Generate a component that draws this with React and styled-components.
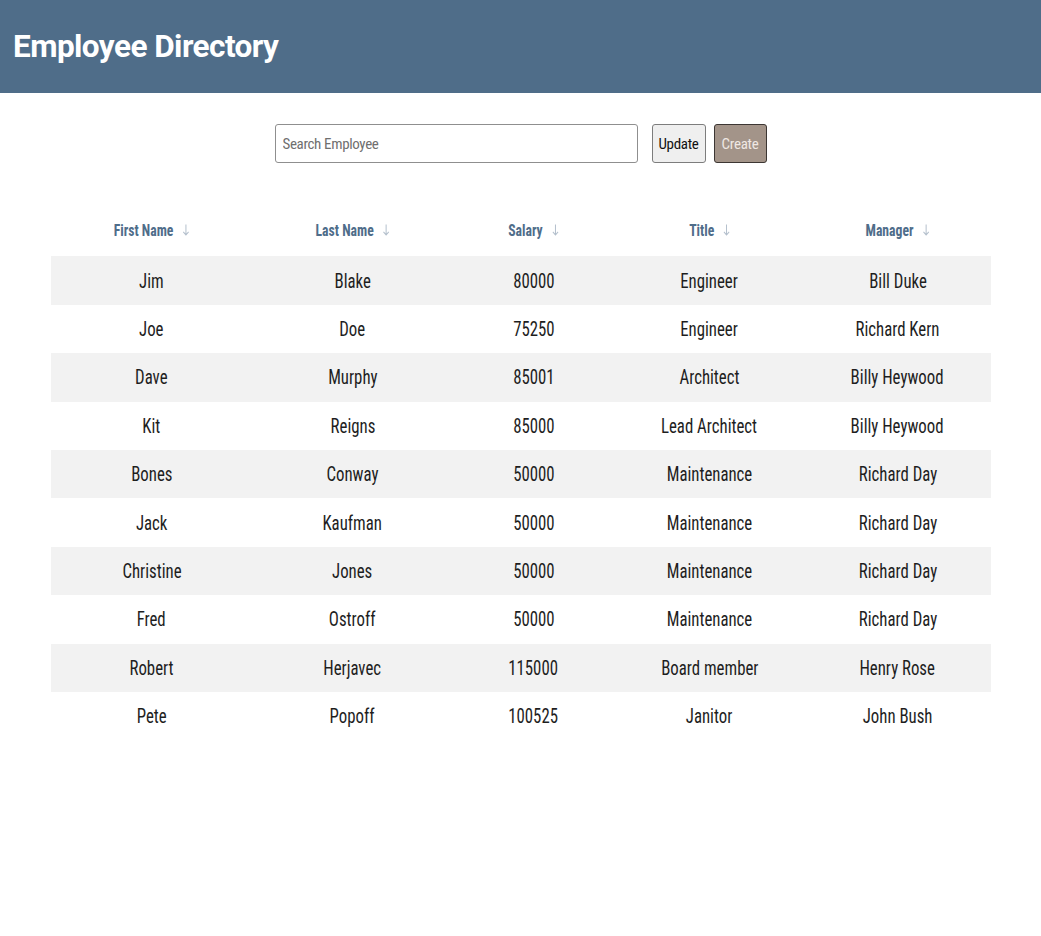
import React from 'react';
import styled, { createGlobalStyle } from 'styled-components';

const GlobalStyle = createGlobalStyle`
  html, body { margin: 0; padding: 0; background: #ffffff; }
  body { font-family: Roboto, "Liberation Sans", Arial, sans-serif; color: #1b1b1b; }
`;

const employees = [
  ['Jim', 'Blake', '80000', 'Engineer', 'Bill Duke'],
  ['Joe', 'Doe', '75250', 'Engineer', 'Richard Kern'],
  ['Dave', 'Murphy', '85001', 'Architect', 'Billy Heywood'],
  ['Kit', 'Reigns', '85000', 'Lead Architect', 'Billy Heywood'],
  ['Bones', 'Conway', '50000', 'Maintenance', 'Richard Day'],
  ['Jack', 'Kaufman', '50000', 'Maintenance', 'Richard Day'],
  ['Christine', 'Jones', '50000', 'Maintenance', 'Richard Day'],
  ['Fred', 'Ostroff', '50000', 'Maintenance', 'Richard Day'],
  ['Robert', 'Herjavec', '115000', 'Board member', 'Henry Rose'],
  ['Pete', 'Popoff', '100525', 'Janitor', 'John Bush'],
];

const columns = [
  { label: 'First Name', width: 202 },
  { label: 'Last Name', width: 200 },
  { label: 'Salary', width: 162 },
  { label: 'Title', width: 190 },
  { label: 'Manager', width: 186 },
];

const Page = styled.div`
  min-height: 936px;
  background: #ffffff;
`;

const Header = styled.header`
  height: 93px;
  background: #4f6d89;
  display: flex;
  align-items: center;
  padding-left: 13px;
  box-sizing: border-box;
`;

const Title = styled.h1`
  margin: 0;
  font-family: Roboto, sans-serif;
  font-weight: 700;
  font-size: 31.5px;
  letter-spacing: -0.55px;
  color: #ffffff;
  line-height: 1;
`;

const Toolbar = styled.div`
  display: flex;
  justify-content: center;
  align-items: stretch;
  margin-top: 31px;
  height: 39px;
`;

const SearchInput = styled.input`
  width: 363px;
  height: 39px;
  box-sizing: border-box;
  border: 1px solid #8f8f8f;
  border-radius: 3px;
  padding: 0 7px;
  font-family: Roboto, sans-serif;
  font-stretch: condensed;
  font-size: 15px;
  letter-spacing: -0.35px;
  color: #222;
  outline: none;
  &::placeholder { color: #6f6f6f; }
`;

const Button = styled.button`
  height: 39px;
  width: ${p => p.$w}px;
  margin-left: ${p => p.$gap}px;
  box-sizing: border-box;
  padding: 0;
  border-radius: 3px;
  font-family: Roboto, sans-serif;
  font-stretch: condensed;
  font-size: 15px;
  letter-spacing: -0.3px;
  cursor: pointer;
  background: ${p => (p.$primary ? '#a39489' : '#efefef')};
  color: ${p => (p.$primary ? '#efe8e3' : '#111')};
  border: 1px solid ${p => (p.$primary ? '#3c3633' : '#7d7d7d')};
`;

const Table = styled.table`
  margin: 43px auto 0;
  width: 940px;
  border-collapse: collapse;
  table-layout: fixed;
`;

const HeadCell = styled.th`
  height: 48.4px;
  padding: 0 0 2px;
  text-align: center;
  vertical-align: middle;
  font-family: Roboto, sans-serif;
  font-stretch: condensed;
  font-weight: 700;
  font-size: 16.5px;
  color: #4f6d8a;
`;

const BodyRow = styled.tr`
  height: 48.4px;
  background: ${p => (p.$alt ? '#f2f2f2' : '#ffffff')};
`;

const Cell = styled.td`
  padding: 0;
  text-align: center;
  vertical-align: middle;
  font-family: Roboto, sans-serif;
  font-stretch: condensed;
  font-weight: 400;
  font-size: 21px;
  color: #1e1e1e;
  white-space: nowrap;
`;

const Squeeze = styled.span`
  display: inline-flex;
  align-items: center;
  transform: scaleX(${p => p.$x});
  transform-origin: center;
`;

const SortArrow = styled.svg`
  width: 8px;
  height: 12px;
  margin-left: 11px;
  flex: none;
`;

function Arrow() {
  return (
    <SortArrow viewBox="0 0 8 12" aria-hidden="true">
      <path d="M4 0.5 V11 M0.8 7.8 L4 11 L7.2 7.8" fill="none" stroke="#b3bfcc" strokeWidth="1.2" />
    </SortArrow>
  );
}

export default function App() {
  return (
    <Page>
      <GlobalStyle />
      <Header>
        <Title>Employee Directory</Title>
      </Header>
      <Toolbar>
        <SearchInput placeholder="Search Employee" />
        <Button $w={54} $gap={14}>Update</Button>
        <Button $w={53} $gap={8} $primary>Create</Button>
      </Toolbar>
      <Table>
        <colgroup>
          {columns.map(c => (
            <col key={c.label} width={c.width} />
          ))}
        </colgroup>
        <thead>
          <tr>
            {columns.map(c => (
              <HeadCell key={c.label}>
                <Squeeze $x={0.83}>
                  {c.label}
                  <Arrow />
                </Squeeze>
              </HeadCell>
            ))}
          </tr>
        </thead>
        <tbody>
          {employees.map((e, i) => (
            <BodyRow key={i} $alt={i % 2 === 0}>
              {e.map((v, j) => (
                <Cell key={j}>
                  <Squeeze $x={0.8}>{v}</Squeeze>
                </Cell>
              ))}
            </BodyRow>
          ))}
        </tbody>
      </Table>
    </Page>
  );
}
